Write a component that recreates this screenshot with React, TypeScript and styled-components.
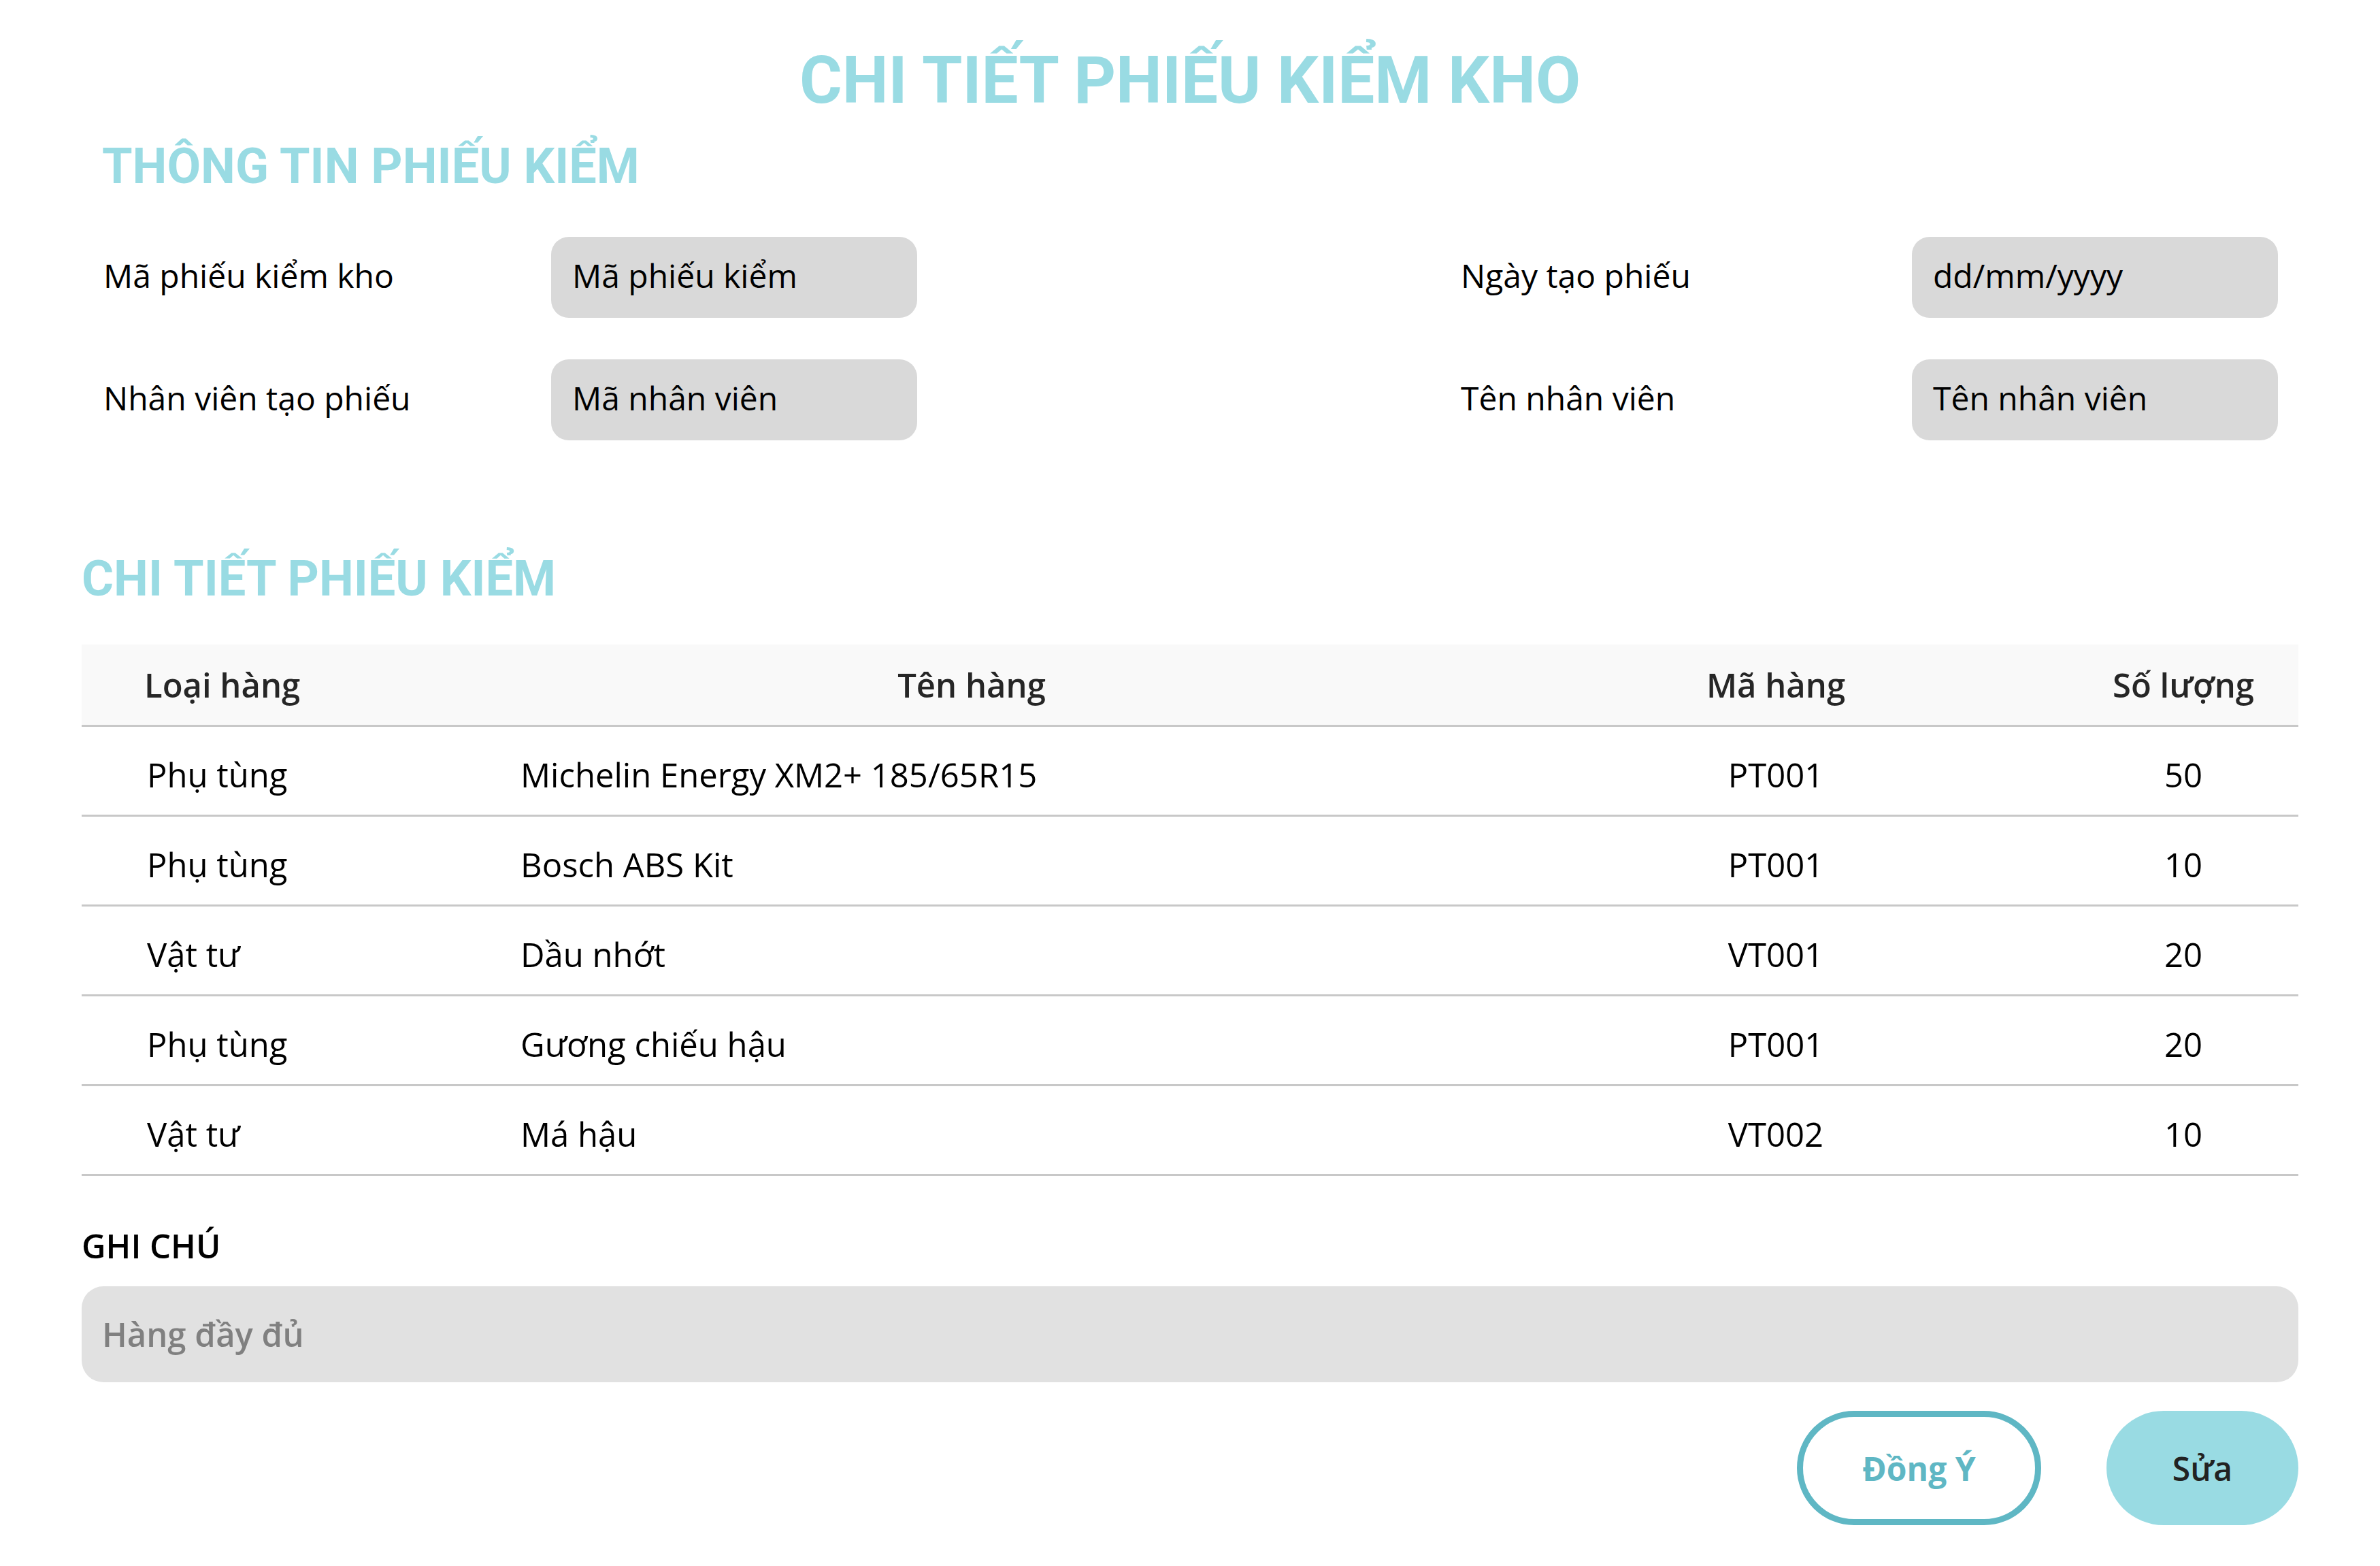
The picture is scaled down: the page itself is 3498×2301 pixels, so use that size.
import React from "react";
import styled, { createGlobalStyle } from "styled-components";

const GlobalStyle = createGlobalStyle`
  html, body { margin: 0; padding: 0; background: #ffffff; }
  body { font-family: "Open Sans", "Noto Sans", sans-serif; }
  * { box-sizing: border-box; }
`;

const Page = styled.div`
  width: 3498px;
  min-height: 2301px;
  padding: 0 120px;
  background: #ffffff;
`;

const Title = styled.h1`
  margin: 0;
  padding-top: 70px;
  font-family: Roboto, "Noto Sans", sans-serif;
  font-weight: 700;
  font-size: 96px;
  line-height: 1;
  color: #99dbe3;
  text-align: center;
`;

const SectionHeading = styled.h2<{ $indent?: number; $top: number }>`
  margin: ${(p) => p.$top}px 0 0 0;
  padding-left: ${(p) => p.$indent ?? 0}px;
  font-family: Roboto, "Noto Sans", sans-serif;
  font-weight: 700;
  font-size: 72px;
  line-height: 1;
  color: #99dbe3;
`;

const InfoGrid = styled.div`
  margin-top: 67px;
  padding: 0 30px 0 32px;
  display: grid;
  grid-template-columns: 658px 538px 1fr 663px 538px;
  row-gap: 61px;
  align-items: center;
`;

const FieldLabel = styled.div`
  font-size: 48px;
  line-height: 1;
  color: #000;
  padding-bottom: 6px;
`;

const Spacer = styled.div``;

const FieldBox = styled.div`
  height: 119px;
  border-radius: 26px;
  background: #d9d9d9;
  display: flex;
  align-items: center;
  padding: 0 0 6px 31px;
  font-size: 48px;
  line-height: 1;
  color: #000;
`;

const Table = styled.div`
  margin-top: 60px;
  width: 100%;
`;

const Row = styled.div<{ $head?: boolean }>`
  display: grid;
  grid-template-columns: 556px 1504px 860px 1fr;
  align-items: center;
  height: ${(p) => (p.$head ? 121 : 132)}px;
  padding-top: ${(p) => (p.$head ? 0 : 12)}px;
  border-bottom: 3px solid #c8c8c8;
  background: ${(p) => (p.$head ? "#f9f9f9" : "#ffffff")};
`;

const Cell = styled.div<{ $align?: "left" | "center"; $pad?: number; $head?: boolean }>`
  text-align: ${(p) => p.$align ?? "left"};
  padding-left: ${(p) => p.$pad ?? 0}px;
  font-size: 49px;
  line-height: 1;
  font-weight: ${(p) => (p.$head ? 600 : 400)};
  color: ${(p) => (p.$head ? "#262626" : "#000")};
  white-space: nowrap;
`;

const NoteLabel = styled.div`
  margin-top: 78px;
  font-size: 49px;
  line-height: 1;
  font-weight: 600;
  color: #000;
`;

const NoteBox = styled.div`
  margin-top: 35px;
  height: 141px;
  border-radius: 32px;
  background: #e1e1e1;
  display: flex;
  align-items: center;
  padding-left: 30px;
  font-size: 49px;
  line-height: 1;
  font-weight: 600;
  color: #808080;
`;

const Actions = styled.div`
  margin-top: 42px;
  display: flex;
  justify-content: flex-end;
  gap: 96px;
`;

const Button = styled.button<{ $variant: "outline" | "solid"; $w: number }>`
  width: ${(p) => p.$w}px;
  height: 168px;
  border-radius: 84px;
  font-family: "Open Sans", "Noto Sans", sans-serif;
  font-size: 48px;
  font-weight: ${(p) => (p.$variant === "outline" ? 700 : 600)};
  border: ${(p) => (p.$variant === "outline" ? "9px solid #5fb7c4" : "none")};
  background: ${(p) => (p.$variant === "outline" ? "#ffffff" : "#99dbe3")};
  color: ${(p) => (p.$variant === "outline" ? "#5fb7c4" : "#222")};
  cursor: pointer;
`;

const rows = [
  ["Phụ tùng", "Michelin Energy XM2+ 185/65R15", "PT001", "50"],
  ["Phụ tùng", "Bosch ABS Kit", "PT001", "10"],
  ["Vật tư", "Dầu nhớt", "VT001", "20"],
  ["Phụ tùng", "Gương chiếu hậu", "PT001", "20"],
  ["Vật tư", "Má hậu", "VT002", "10"],
];

export default function App() {
  return (
    <Page>
      <GlobalStyle />
      <Title>CHI TIẾT PHIẾU KIỂM KHO</Title>
      <SectionHeading $indent={30} $top={43}>THÔNG TIN PHIẾU KIỂM</SectionHeading>
      <InfoGrid>
        <FieldLabel>Mã phiếu kiểm kho</FieldLabel>
        <FieldBox>Mã phiếu kiểm</FieldBox>
        <Spacer />
        <FieldLabel>Ngày tạo phiếu</FieldLabel>
        <FieldBox>dd/mm/yyyy</FieldBox>
        <FieldLabel>Nhân viên tạo phiếu</FieldLabel>
        <FieldBox>Mã nhân viên</FieldBox>
        <Spacer />
        <FieldLabel>Tên nhân viên</FieldLabel>
        <FieldBox>Tên nhân viên</FieldBox>
      </InfoGrid>
      <SectionHeading $top={168}>CHI TIẾT PHIẾU KIỂM</SectionHeading>
      <Table>
        <Row $head>
          <Cell $head $pad={92}>Loại hàng</Cell>
          <Cell $head $align="center">Tên hàng</Cell>
          <Cell $head $align="center">Mã hàng</Cell>
          <Cell $head $align="center">Số lượng</Cell>
        </Row>
        {rows.map((r, i) => (
          <Row key={i}>
            <Cell $pad={96}>{r[0]}</Cell>
            <Cell $pad={89}>{r[1]}</Cell>
            <Cell $align="center">{r[2]}</Cell>
            <Cell $align="center">{r[3]}</Cell>
          </Row>
        ))}
      </Table>
      <NoteLabel>GHI CHÚ</NoteLabel>
      <NoteBox>Hàng đầy đủ</NoteBox>
      <Actions>
        <Button $variant="outline" $w={359}>Đồng Ý</Button>
        <Button $variant="solid" $w={282}>Sửa</Button>
      </Actions>
    </Page>
  );
}
